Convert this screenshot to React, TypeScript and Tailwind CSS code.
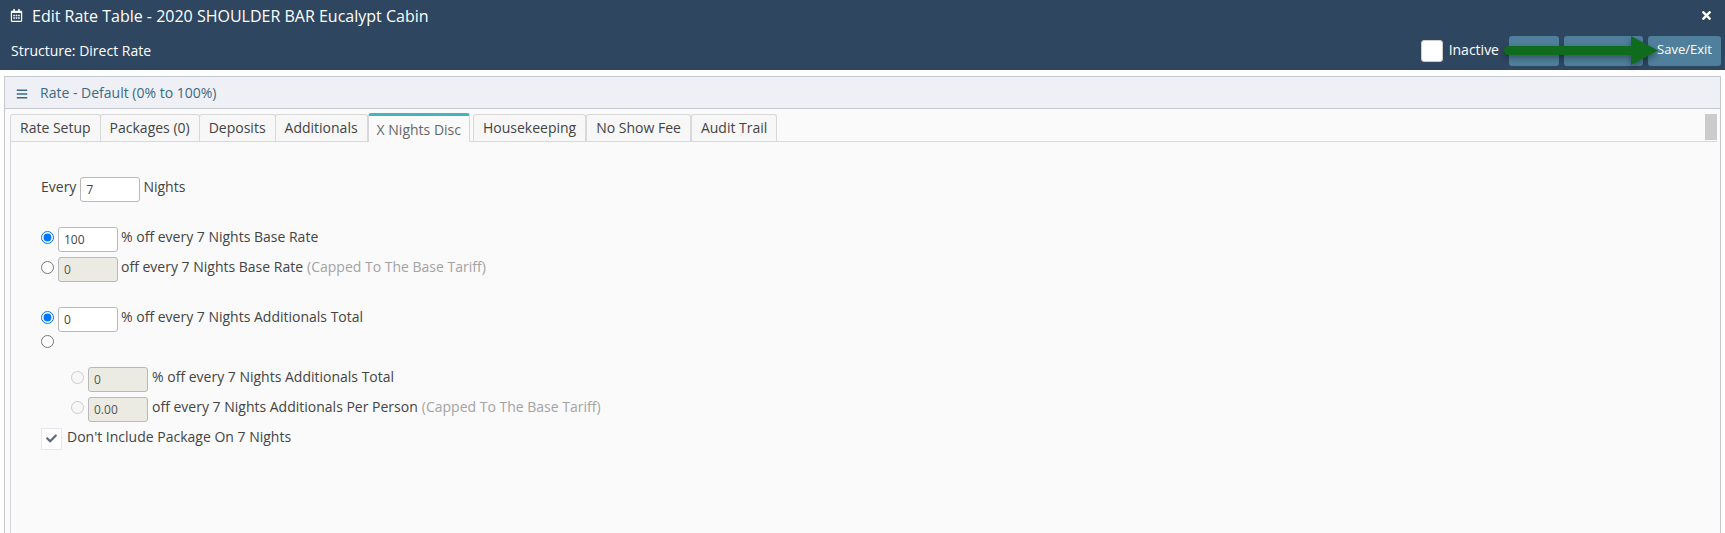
import { FaBars, FaCheck, FaRegCalendarAlt, FaTimes } from 'react-icons/fa'

const tabs = ['Rate Setup', 'Packages (0)', 'Deposits', 'Additionals', 'X Nights Disc', 'Housekeeping', 'No Show Fee', 'Audit Trail']

function Radio({ checked, disabled }: { checked?: boolean; disabled?: boolean }) {
  return <input type="radio" readOnly checked={!!checked} disabled={disabled} className="-mt-[4px] h-[13px] w-[13px] shrink-0" />
}

function Box({ value, disabled }: { value: string; disabled?: boolean }) {
  return (
    <input
      readOnly
      value={value}
      disabled={disabled}
      className={`h-[25px] w-[60px] shrink-0 rounded-[3px] border border-[#b9b9b9] pl-[5px] text-[12px] ${
        disabled ? 'bg-[#ebebe4] text-[#555555]' : 'bg-white text-[#444444]'
      }`}
    />
  )
}

function Row({ children, className }: { children: React.ReactNode; className?: string }) {
  return <div className={`flex h-[25px] items-center text-[14px] text-[#444444] ${className ?? ''}`}>{children}</div>
}

const capped = <span className="ml-1 text-[#a3a3a3]">(Capped To The Base Tariff)</span>

export default function App() {
  return (
    <div className="relative h-[533px] w-[1725px] overflow-hidden bg-white font-['Open_Sans',sans-serif]">
      <div className="h-[70px] bg-[#2f4660] text-white">
        <div className="flex h-[31px] items-center justify-between pl-[10px] pr-[12px]">
          <div className="flex items-center gap-[9px]">
            <FaRegCalendarAlt size={13} />
            <span className="text-[16px] leading-none">Edit Rate Table - 2020 SHOULDER BAR Eucalypt Cabin</span>
          </div>
          <FaTimes size={13} />
        </div>
        <div className="flex h-[39px] items-center justify-between pl-[11px] pr-[4px]">
          <span className="text-[14px]">Structure: Direct Rate</span>
          <div className="flex items-center">
            <span className="h-[22px] w-[22px] rounded-[3px] border border-[#cccccc] bg-white" />
            <span className="-mt-[2px] ml-[6px] text-[14px]">Inactive</span>
            <span className="ml-[10px] h-[30px] w-[50px] rounded-[3px] bg-[#4f7f9b]" />
            <span className="ml-[5px] h-[30px] w-[79px] rounded-[3px] bg-[#4f7f9b]" />
            <span className="ml-[5px] flex h-[30px] w-[73px] items-center justify-center rounded-[3px] bg-[#4f7f9b] pb-[2px] text-[13px]">Save/Exit</span>
          </div>
        </div>
      </div>

      <div className="px-[4px] pt-[6px]">
        <div className="h-[457px] border border-b-0 border-[#c5c8cc] bg-[#fafafa]">
          <div className="flex h-[32px] items-center gap-[12px] border-b border-[#c5c8cc] bg-[#eef0f5] pl-[11px] text-[#3d6a85]">
            <FaBars size={12} className="mt-[2px]" />
            <span className="text-[14px]">Rate - Default (0% to 100%)</span>
          </div>
          <div className="relative pl-[5px] pr-[3px] pt-[5px]">
            <div className="flex h-[28px] items-end border-b border-[#d8d8d8]">
              {tabs.map((t, i) =>
                t === 'X Nights Disc' ? (
                  <div
                    key={t}
                    className="relative -mb-px mr-[3px] flex h-[29px] items-center rounded-t-[3px] border-x border-t-[3px] border-x-[#d8d8d8] border-t-[#45b5bd] bg-[#fafafa] px-[8px] text-[14px] text-[#666666]"
                  >
                    {t}
                  </div>
                ) : (
                  <div
                    key={t}
                    className={`flex h-[27px] items-center rounded-t-[3px] border border-b-0 border-[#d8d8d8] bg-[#f7f7f7] px-[9px] pb-[2px] text-[14px] text-[#444444] ${
                      i > 0 && i < 4 ? '-ml-px' : ''
                    }`}
                  >
                    {t}
                  </div>
                ),
              )}
            </div>
            <div className="absolute right-[3px] top-[5px] h-[26px] w-[12px] bg-[#cccccc]" />
            <div className="h-[400px] border-l border-[#d8d8d8] pl-[30px] pt-[35px]">
              <Row>
                <span className="-mt-[7px]">Every</span>
                <span className="ml-[4px] mr-[3px] flex"><Box value="7" /></span>
                <span className="-mt-[7px]">Nights</span>
              </Row>

              <Row className="mt-[25px] gap-[4px]">
                <Radio checked />
                <Box value="100" />
                <span className="-ml-px -mt-[7px]">% off every 7 Nights Base Rate</span>
              </Row>
              <Row className="mt-[5px] gap-[4px]">
                <Radio />
                <Box value="0" disabled />
                <span className="-ml-px -mt-[7px]">off every 7 Nights Base Rate{capped}</span>
              </Row>

              <Row className="mt-[25px] gap-[4px]">
                <Radio checked />
                <Box value="0" />
                <span className="-ml-px -mt-[7px]">% off every 7 Nights Additionals Total</span>
              </Row>
              <div className="mt-[5px] flex h-[13px] items-center">
                <Radio />
              </div>

              <div className="pl-[30px]">
                <Row className="mt-[17px] gap-[4px]">
                  <Radio disabled />
                  <Box value="0" disabled />
                  <span className="-mt-[7px]">% off every 7 Nights Additionals Total</span>
                </Row>
                <Row className="mt-[5px] gap-[4px]">
                  <Radio disabled />
                  <Box value="0.00" disabled />
                  <span className="-mt-[7px]">off every 7 Nights Additionals Per Person{capped}</span>
                </Row>
              </div>

              <Row className="mt-[4px] gap-[5px]">
                <span className="flex h-[22px] w-[21px] items-center justify-center border border-[#e4e6f2] bg-white text-[#5c6680]">
                  <FaCheck size={11} />
                </span>
                <span className="-mt-[5px]">Don't Include Package On 7 Nights</span>
              </Row>
            </div>
          </div>
        </div>
      </div>

      {/* annotation arrow over the buttons */}
      <svg className="absolute left-[1500px] top-[30px] drop-shadow-[0_3px_3px_rgba(0,0,0,0.35)]" width="170" height="40" viewBox="0 0 170 40">
        <path d="M8.5 16H131V6L158 20.5L131 35V25H8.5a4.5 4.5 0 0 1 0-9Z" fill="#0f6b1e" />
      </svg>
    </div>
  )
}
